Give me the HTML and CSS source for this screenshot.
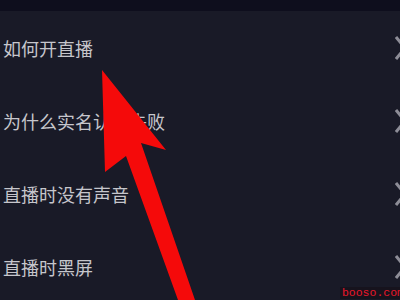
FILE: index.html
```html
<!DOCTYPE html>
<html>
<head>
<meta charset="utf-8">
<link rel="stylesheet" href="styles.css">
</head>
<body>
<div class="screen">
  <div class="topbar"></div>
  <ul class="list">
    <li class="row"><span class="label">如何开直播</span><svg class="chev" width="12" height="24" viewBox="0 0 12 24"><polyline points="1,1 10,12 1,23" fill="none" stroke="#8d8d97" stroke-width="3"/></svg></li>
    <li class="row"><span class="label">为什么实名认证失败</span><svg class="chev" width="12" height="24" viewBox="0 0 12 24"><polyline points="1,1 10,12 1,23" fill="none" stroke="#8d8d97" stroke-width="3"/></svg></li>
    <li class="row"><span class="label">直播时没有声音</span><svg class="chev" width="12" height="24" viewBox="0 0 12 24"><polyline points="1,1 10,12 1,23" fill="none" stroke="#8d8d97" stroke-width="3"/></svg></li>
    <li class="row"><span class="label">直播时黑屏</span><svg class="chev" width="12" height="24" viewBox="0 0 12 24"><polyline points="1,1 10,12 1,23" fill="none" stroke="#8d8d97" stroke-width="3"/></svg></li>
  </ul>
  <svg class="arrow" width="400" height="300" viewBox="0 0 400 300">
    <polygon points="102,70 166,150 141,143 195,300 178,300 126,156 105,172" fill="#f50a0a"/>
  </svg>
  <div class="mark">booso.com</div>
</div>
</body>
</html>
```
FILE: styles.css
```css
html, body {
  margin: 0;
  padding: 0;
  background: #191a27;
}
.screen {
  position: relative;
  width: 400px;
  height: 300px;
  overflow: hidden;
  background: #191a27;
  font-family: "Noto Sans CJK SC", "Noto Sans", sans-serif;
}
.topbar {
  height: 11px;
  background: #0e0e1d;
}
.list {
  list-style: none;
  margin: 0;
  padding: 0;
}
.row {
  height: 73px;
  display: flex;
  align-items: center;
  justify-content: space-between;
  padding-left: 3px;
}
.label {
  color: #c6c6cc;
  font-size: 18px;
  line-height: 1;
}
.chev {
  margin-right: -7px;
  flex: none;
}
.arrow {
  position: absolute;
  left: 0;
  top: 0;
}
.mark {
  position: absolute;
  right: -4px;
  bottom: 1px;
  padding: 0 0 0 2px;
  font-family: "Liberation Mono", monospace;
  font-size: 11.5px;
  line-height: 12px;
  color: #e8162a;
  background: #16131d;
}
```
